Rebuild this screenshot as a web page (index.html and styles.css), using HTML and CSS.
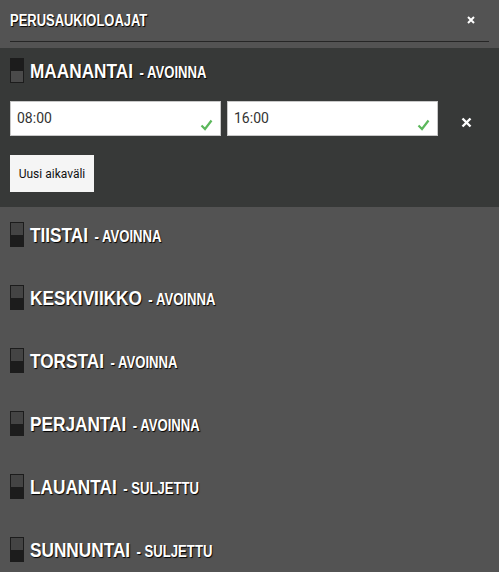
FILE: index.html
```html
<!DOCTYPE html>
<html lang="fi">
<head>
<meta charset="utf-8">
<title>Perusaukioloajat</title>
<link rel="stylesheet" href="styles.css">
</head>
<body>
<div class="panel">
  <div class="panel-head">
    <h2 class="panel-title">PERUSAUKIOLOAJAT</h2>
    <svg class="panel-close" width="8" height="8" viewBox="0 0 8 8"><path d="M1 1L7 7M7 1L1 7" stroke="#fff" stroke-width="2"/></svg>
  </div>

  <div class="day open">
    <div class="day-head">
      <span class="toggle on"></span>
      <h3 class="day-name">MAANANTAI <small>- AVOINNA</small></h3>
    </div>
    <div class="range">
      <label class="time"><input type="text" value="08:00"><svg class="ok" width="13" height="12" viewBox="0 0 13 12"><path d="M1.5 6.5L5 10L11.5 1.5" fill="none" stroke="#5cb85c" stroke-width="2.2"/></svg></label>
      <label class="time"><input type="text" value="16:00"><svg class="ok" width="13" height="12" viewBox="0 0 13 12"><path d="M1.5 6.5L5 10L11.5 1.5" fill="none" stroke="#5cb85c" stroke-width="2.2"/></svg></label>
      <svg class="remove" width="11" height="11" viewBox="0 0 11 11"><path d="M1.5 1.5L9.5 9.5M9.5 1.5L1.5 9.5" stroke="#fff" stroke-width="2.4"/></svg>
    </div>
    <button class="add-btn">Uusi aikaväli</button>
  </div>

  <div class="day">
    <div class="day-head"><span class="toggle"></span><h3 class="day-name">TIISTAI <small>- AVOINNA</small></h3></div>
  </div>
  <div class="day">
    <div class="day-head"><span class="toggle"></span><h3 class="day-name">KESKIVIIKKO <small>- AVOINNA</small></h3></div>
  </div>
  <div class="day">
    <div class="day-head"><span class="toggle"></span><h3 class="day-name">TORSTAI <small>- AVOINNA</small></h3></div>
  </div>
  <div class="day">
    <div class="day-head"><span class="toggle"></span><h3 class="day-name">PERJANTAI <small>- AVOINNA</small></h3></div>
  </div>
  <div class="day">
    <div class="day-head"><span class="toggle"></span><h3 class="day-name">LAUANTAI <small>- SULJETTU</small></h3></div>
  </div>
  <div class="day">
    <div class="day-head"><span class="toggle"></span><h3 class="day-name">SUNNUNTAI <small>- SULJETTU</small></h3></div>
  </div>
</div>
</body>
</html>
```

FILE: styles.css
```css
* {box-sizing: border-box;}
html, body {margin: 0; padding: 0; background: #535353;}
body {font-family: "Liberation Sans", sans-serif; color: #fff; width: 499px; height: 572px; overflow: hidden;}

/* otsikot on kapeampaa fonttia, puristetaan vaakasuunnassa */
.panel {background: #535353;}
.panel-head {display: flex; align-items: center; justify-content: space-between; height: 42px; margin: 0 10px 6px 10px; border-bottom: 1px solid #262626;}
.panel-title {margin: 0; font-size: 16px; font-weight: bold; text-shadow: 1px 1px 1px #000; white-space: nowrap; transform: scaleX(0.81); transform-origin: left center;}
.panel-close {margin-right: 14px; margin-top: -2px;}

.day {height: 63px; padding: 15px 10px 0 10px;}
.day.open {height: 159px; padding-top: 10px; background: #373938;}
.day-head {display: flex; align-items: center; gap: 6px; height: 25px;}
.day-name {margin: 0; font-size: 21px; font-weight: bold; text-shadow: 1px 1px 1px #000; white-space: nowrap; transform: scaleX(0.82); transform-origin: left center;}
.day-name small {font-size: 16px; margin-left: 2px;}

.toggle {display: flex; flex-direction: column; width: 14px; height: 25px; border: 1px solid #1c1c1c; background: #1c1c1c;}
.toggle::before, .toggle::after {content: ""; flex: 1;}
.toggle::before {background: #444;}
.toggle::after {background: #1c1c1c;}
.toggle.on::before {background: #1c1c1c;}
.toggle.on::after {background: #4a4a4a;}

.range {display: flex; align-items: center; gap: 6px; margin-top: 18px;}
.time {position: relative; display: block; width: 211px; height: 35px;}
.time input {width: 100%; height: 100%; margin: 0; border: 1px solid #c8c8c8; background: #fff; padding: 0 30px 1px 6px; font-family: Roboto, sans-serif; font-size: 14px; color: #333; outline: none;}
.ok {position: absolute; right: 8px; bottom: 5px;}
.remove {margin-left: 17px; margin-top: 8px;}

.add-btn {display: block; margin-top: 19px; width: 84px; height: 37px; padding: 0; border: none; background: #f5f5f5; color: #111; font-family: Roboto, sans-serif; font-size: 12px;}
```
